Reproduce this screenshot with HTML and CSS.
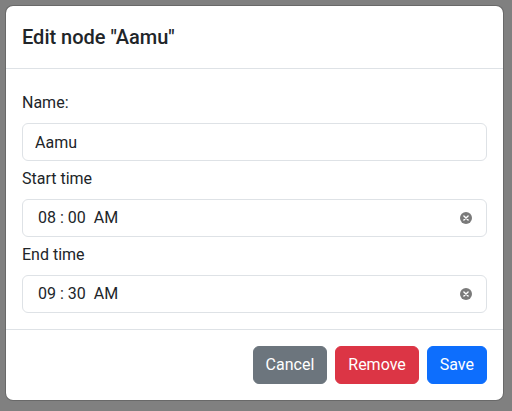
FILE: index.html
```html
<!DOCTYPE html>
<html lang="en">
<head>
<meta charset="utf-8">
<title>Edit node</title>
<link rel="stylesheet" href="styles.css">
</head>
<body>
<div class="modal">
  <div class="modal-header">
    <h5 class="modal-title">Edit node "Aamu"</h5>
  </div>
  <div class="modal-body">
    <label class="form-label" for="name">Name:</label>
    <input class="form-control" id="name" type="text" value="Aamu">
    <label class="form-label">Start time</label>
    <div class="form-control time-control">
      <span class="time-value">08 : 00  AM</span>
      <svg class="clear-icon" width="12" height="12" viewBox="0 0 12 12" aria-hidden="true"><circle cx="6" cy="6" r="6" fill="#7a7a7a"/><path d="M3.9 3.9 L8.1 8.1 M8.1 3.9 L3.9 8.1" stroke="#fff" stroke-width="1.4" stroke-linecap="round"/></svg>
    </div>
    <label class="form-label">End time</label>
    <div class="form-control time-control">
      <span class="time-value">09 : 30  AM</span>
      <svg class="clear-icon" width="12" height="12" viewBox="0 0 12 12" aria-hidden="true"><circle cx="6" cy="6" r="6" fill="#7a7a7a"/><path d="M3.9 3.9 L8.1 8.1 M8.1 3.9 L3.9 8.1" stroke="#fff" stroke-width="1.4" stroke-linecap="round"/></svg>
    </div>
  </div>
  <div class="modal-footer">
    <button class="btn btn-secondary" type="button">Cancel</button>
    <button class="btn btn-danger" type="button">Remove</button>
    <button class="btn btn-primary" type="button">Save</button>
  </div>
</div>
</body>
</html>
```
FILE: styles.css
```css
* { box-sizing: border-box; }
html, body { height: 100%; }
body {
  margin: 0;
  padding: 5px;
  background: #808080;
  font-family: Roboto, "Liberation Sans", sans-serif;
  font-size: 16px;
  line-height: 1.5;
  color: #212529;
}
.modal {
  width: 499px;
  background: #fff;
  background-clip: padding-box;
  border: 1px solid rgba(0,0,0,.175);
  border-radius: 8px;
}
.modal-header {
  padding: 16px;
  border-bottom: 1px solid #dee2e6;
}
.modal-title {
  margin: 0;
  font-size: 20px;
  font-weight: 500;
  line-height: 1.5;
}
.modal-body {
  padding: 16px;
  display: flex;
  flex-direction: column;
}
.form-label {
  display: block;
  margin-top: 6px;
  margin-bottom: 8px;
  line-height: 24px;
}
.form-control {
  display: block;
  width: 100%;
  height: 38px;
  padding: 6px 12px;
  font: inherit;
  color: #212529;
  background: #fff;
  border: 1px solid #dee2e6;
  border-radius: 6px;
  outline: none;
}
.time-control {
  display: flex;
  align-items: center;
  justify-content: space-between;
  padding-left: 15px;
  padding-right: 14px;
}
.time-value { white-space: pre; }
.clear-icon { flex: none; }
.modal-footer {
  display: flex;
  justify-content: flex-end;
  padding: 12px;
  border-top: 1px solid #dee2e6;
}
.btn {
  margin: 4px;
  padding: 6px 12px;
  font: inherit;
  line-height: 24px;
  color: #fff;
  border: 1px solid transparent;
  border-radius: 6px;
}
.btn-secondary { background: #6c757d; border-color: #6c757d; }
.btn-danger { background: #dc3545; border-color: #dc3545; }
.btn-primary { background: #0d6efd; border-color: #0d6efd; }
```
